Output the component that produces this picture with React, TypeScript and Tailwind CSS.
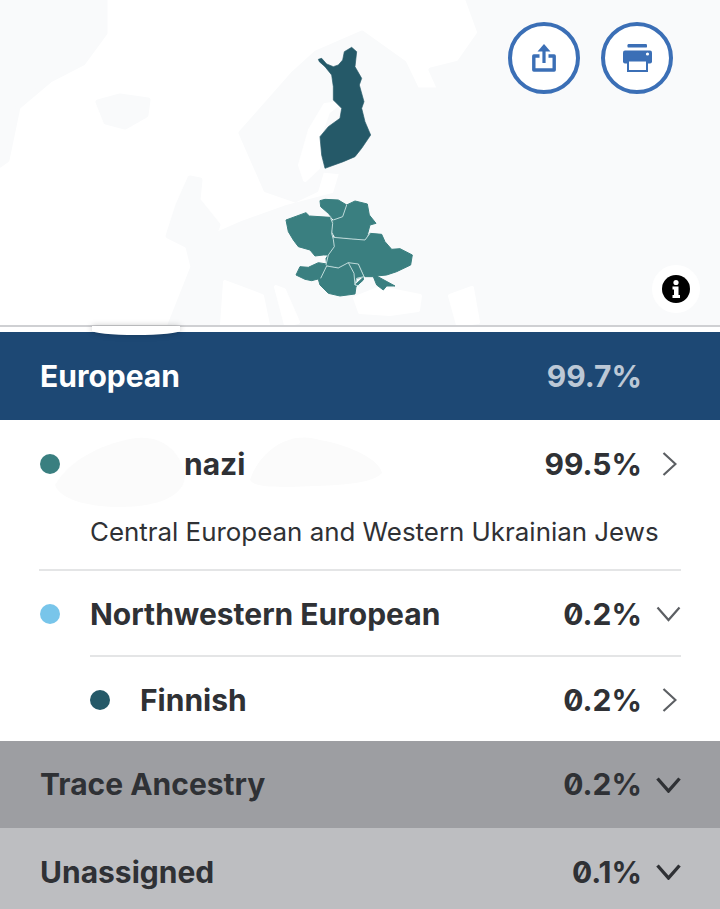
const font = "font-['Inter','Liberation_Sans',sans-serif]";

// faint land masses behind the highlighted regions
const land = [
  "M0 0 H105 L105 33 L83 63 L50 80 L18 107 L7 160 L0 165 Z",
  "M98 102 L120 96 L148 100 L146 115 L125 127 L106 122 Z",
  "M190 178 L200 180 L198 200 L218 225 L212 240 L190 247 L168 236 L178 205 Z",
  "M241 133 L294 73 L316 53 L362 33 L404 63 L417 90 L440 90 L431 70 L459 63 L480 33 L468 0 H720 V325 H170 L193 267 L188 247 L243 223 L285 208 L335 195 L342 172 L322 170 L316 190 L295 200 L266 190 Z",
];

// water cut back out of the land
const water = [
  "M340 103 L328 112 L320 135 L318 168 L305 180 L300 165 L310 130 L325 105 Z",
  "M355 298 L380 288 L420 296 L418 310 L390 314 L360 312 Z",
  "M450 296 L472 288 L478 322 L458 325 Z",
  "M276 287 L284 290 L298 322 L286 325 Z",
  "M225 282 L262 296 L268 325 L222 325 Z",
];

const finland =
  "25,58 35,55 50,72 70,80 85,75 98,60 103,35 125,22 140,35 135,80 155,115 148,135 162,185 155,205 165,245 182,285 155,325 135,350 100,365 45,385 35,345 30,290 55,260 90,235 95,205 70,180 70,140 65,105 45,80 28,65";

const regions = [
  "18,90 78,68 88,78 150,82 158,95 155,130 160,148 162,170 145,195 130,195 105,198 90,180 55,170 40,150 25,125",
  "120,32 135,28 175,30 200,45 188,80 160,88 145,70 122,50",
  "200,45 225,33 262,42 268,75 288,100 270,105 262,135 255,150 215,145 165,140 157,125 160,90 188,80",
  "160,142 215,147 255,150 270,130 305,133 315,155 335,178 360,176 397,195 392,225 350,245 320,255 290,258 312,270 345,288 320,288 310,300 290,285 280,260 255,260 237,222 207,218 175,232 140,225 138,205 162,170",
  "48,255 60,230 85,232 115,218 140,222 122,265 95,272 75,268",
  "140,228 175,234 205,218 222,250 225,285 250,262 250,270 228,290 225,312 180,318 145,310 120,285 115,268",
  "205,218 235,222 252,260 230,265 225,285",
];

const borders = [
  "152,85 158,100 155,130 160,148 163,170 145,195 138,225",
  "200,45 188,80 160,90",
  "160,142 215,147 255,150 270,130",
  "122,265 140,228 175,234 205,218 235,222 252,260 230,265 225,285 240,288",
  "205,218 222,250 225,285",
];

function MapBackdrop() {
  return (
    <svg viewBox="0 0 720 325" className="block h-[325px] w-[720px]" aria-hidden="true">
      <rect width="720" height="325" fill="#ffffff" />
      {land.map((d) => (
        <path key={d} d={d} fill="#f9fafb" stroke="#f9fafb" strokeWidth="5" strokeLinejoin="round" />
      ))}
      {water.map((d) => (
        <path key={d} d={d} fill="#ffffff" stroke="#ffffff" strokeWidth="4" strokeLinejoin="round" />
      ))}
      <g transform="translate(310 40) scale(0.3333)" strokeLinejoin="round">
        <polygon points={finland} fill="#255968" stroke="#255968" strokeWidth="2" />
      </g>
      <g transform="translate(280 190) scale(0.3333)" strokeLinejoin="round">
        {regions.map((p) => (
          <polygon key={p} points={p} fill="#3a7f80" stroke="#3a7f80" strokeWidth="3" />
        ))}
        {borders.map((p) => (
          <polyline key={p} points={p} fill="none" stroke="#d9ecec" strokeWidth="2.5" />
        ))}
      </g>
    </svg>
  );
}

function ShareIcon() {
  return (
    <svg width="24" height="28" viewBox="0 0 24 28" aria-hidden="true">
      <polygon points="12,0 18.5,7.5 5.5,7.5" fill="#3b6fb6" />
      <rect x="10.4" y="6" width="3.2" height="13" fill="#3b6fb6" />
      <path d="M7.5 12 H1.8 V26 H22.2 V12 H16.5" fill="none" stroke="#3b6fb6" strokeWidth="3.4" strokeLinejoin="round" />
    </svg>
  );
}

function PrintIcon() {
  return (
    <svg width="29" height="28" viewBox="0 0 29 28" aria-hidden="true">
      <rect x="4.5" y="0" width="19.5" height="3.6" rx="1.2" fill="#3b6fb6" />
      <rect x="0" y="6.5" width="29" height="13" rx="2" fill="#3b6fb6" />
      <circle cx="24.5" cy="10" r="1.6" fill="#ffffff" />
      <rect x="5" y="16.5" width="19" height="10.5" fill="#ffffff" stroke="#3b6fb6" strokeWidth="2" />
    </svg>
  );
}

function InfoIcon() {
  return (
    <svg width="28" height="28" viewBox="0 0 28 28" aria-hidden="true">
      <circle cx="14" cy="14" r="14" fill="#000000" />
      <circle cx="14" cy="7.5" r="2.6" fill="#ffffff" />
      <path d="M10.5 11.5 H16.5 V20 H18 V23 H10.5 V20 H12 V14.5 H10.5 Z" fill="#ffffff" />
    </svg>
  );
}

function ChevronRightThin() {
  return (
    <svg width="15" height="24" viewBox="0 0 15 24" className="mr-[4px]" aria-hidden="true">
      <polyline points="1.5,1 13.5,12 1.5,23" fill="none" stroke="#5c5f63" strokeWidth="2.2" />
    </svg>
  );
}

function ChevronDownIcon({ bold }: { bold?: boolean }) {
  return (
    <svg width="25" height="16" viewBox="0 0 25 16" aria-hidden="true">
      <polyline
        points="1.5,1.5 12.5,14 23.5,1.5"
        fill="none"
        stroke={bold ? "#2f3135" : "#5c5f63"}
        strokeWidth={bold ? 3.4 : 2.2}
      />
    </svg>
  );
}

function RowValue({ value, chevron }: { value: string; chevron: "right" | "down" | "down-bold" }) {
  return (
    <div className="flex items-center">
      <span className="text-[30px] font-bold slashed-zero text-[#2f3135]">{value}</span>
      <div className="flex w-[39px] justify-end">
        {chevron === "right" ? <ChevronRightThin /> : <ChevronDownIcon bold={chevron === "down-bold"} />}
      </div>
    </div>
  );
}

export default function App() {
  return (
    <div className={`relative h-[909px] w-[720px] overflow-hidden bg-white ${font}`}>
      <div className="relative">
        <MapBackdrop />
        <div className="absolute right-[47px] top-[22px] flex gap-[21px]">
          <button className="flex h-[72px] w-[72px] items-center justify-center rounded-full border-4 border-[#3b6fb6] bg-white">
            <ShareIcon />
          </button>
          <button className="flex h-[72px] w-[72px] items-center justify-center rounded-full border-4 border-[#3b6fb6] bg-white">
            <PrintIcon />
          </button>
        </div>
        <div className="absolute left-[652px] top-[265px] flex h-[48px] w-[48px] items-center justify-center rounded-full bg-white">
          <InfoIcon />
        </div>
      </div>

      <div className="h-[2px] bg-[#cfd0d3]" />
      <div className="h-[5px] bg-white" />

      <div className="relative flex h-[88px] items-center justify-between bg-[#1d4874] pl-[40px] pr-[78px]">
        <div className="absolute left-[92px] top-[-6px] h-[9px] w-[88px] rounded-b-[100%] bg-white shadow-[0_0_6px_rgba(0,0,0,0.25)]" />
        <span className="text-[30px] font-bold text-white">European</span>
        <span className="text-[30px] font-bold text-[#bcc8d6]">99.7%</span>
      </div>

      <div className="relative">
        <svg className="absolute left-[50px] top-[5px]" width="340" height="85" viewBox="0 0 340 85" aria-hidden="true">
          <path
            d="M5 60 C20 35 50 20 80 14 C110 8 130 25 135 50 C135 70 110 82 70 82 C40 82 10 75 5 60 Z"
            fill="#fbfbfb"
          />
          <path d="M200 55 C210 25 240 5 270 15 C300 20 330 35 332 48 C320 62 270 60 240 62 C220 62 205 62 200 55 Z" fill="#fbfbfb" />
        </svg>
        <div className="relative flex h-[88px] items-center justify-between pl-[40px] pr-[39px]">
          <div className="flex items-center">
            <span className="h-[20px] w-[20px] rounded-full bg-[#3a7f80]" />
            <span className="ml-[124px] text-[30px] font-bold text-[#2f3135]">nazi</span>
          </div>
          <RowValue value="99.5%" chevron="right" />
        </div>
        <p className="relative ml-[90px] text-[25.9px] leading-[48px] text-[#2f3135]">Central European and Western Ukrainian Jews</p>
      </div>

      <div className="mx-[39px] mt-[13px] h-[2px] bg-[#e4e5e6]" />

      <div className="flex h-[84px] items-center justify-between pl-[40px] pr-[39px] pt-[2px]">
        <div className="flex items-center gap-[30px]">
          <span className="h-[20px] w-[20px] rounded-full bg-[#78c5ea]" />
          <span className="text-[30px] font-bold text-[#2f3135]">Northwestern European</span>
        </div>
        <RowValue value="0.2%" chevron="down" />
      </div>

      <div className="ml-[90px] mr-[39px] h-[2px] bg-[#e4e5e6]" />

      <div className="flex h-[84px] items-center justify-between pl-[90px] pr-[39px] pt-[2px]">
        <div className="flex items-center gap-[30px]">
          <span className="h-[20px] w-[20px] rounded-full bg-[#255968]" />
          <span className="text-[30px] font-bold text-[#2f3135]">Finnish</span>
        </div>
        <RowValue value="0.2%" chevron="right" />
      </div>

      <div className="flex h-[87px] items-center justify-between bg-[#9d9ea2] pl-[40px] pr-[39px]">
        <span className="text-[30px] font-bold text-[#2f3135]">Trace Ancestry</span>
        <RowValue value="0.2%" chevron="down-bold" />
      </div>

      <div className="flex h-[88px] items-center justify-between bg-[#bdbec1] pl-[40px] pr-[39px]">
        <span className="text-[30px] font-bold text-[#2f3135]">Unassigned</span>
        <RowValue value="0.1%" chevron="down-bold" />
      </div>
    </div>
  );
}
